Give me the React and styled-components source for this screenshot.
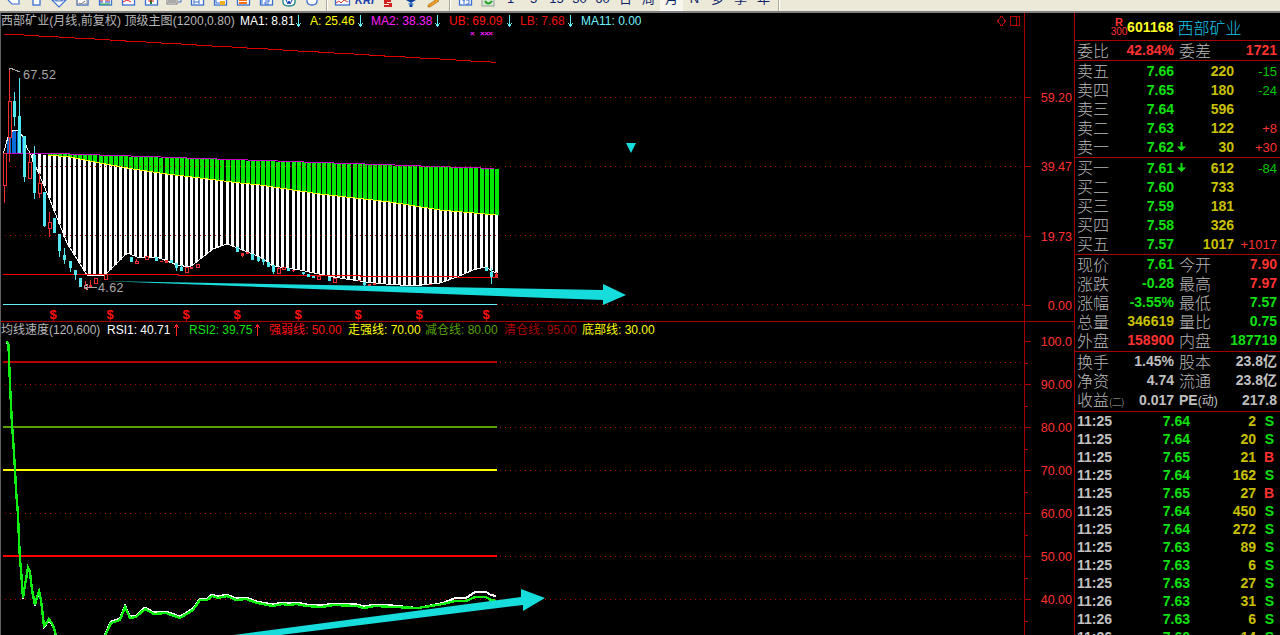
import React from "react";
import styled, { createGlobalStyle } from "styled-components";

const RED = "#ff3232";
const GREEN = "#10e010";
const OCHRE = "#c8c000";
const GREY = "#c0c0c0";
const LINE = "#a80000";

const GlobalStyle = createGlobalStyle`
  html, body { margin: 0; padding: 0; background: #000; height: 635px; overflow: hidden; }
  * { box-sizing: border-box; }
`;

const Page = styled.div`
  width: 1280px;
  height: 635px;
  display: flex;
  flex-direction: column;
  background: #000;
  overflow: hidden;
  font-family: "Liberation Sans", "Noto Sans CJK SC", sans-serif;
`;

/* ---------- toolbar ---------- */
const Toolbar = styled.div`
  height: 13px;
  flex: none;
  display: flex;
  background: #ece9d8;
  border-bottom: 2px solid #808080;
  overflow: hidden;
`;
const ToolGroup = styled.div`
  display: flex;
  padding-left: ${(p) => p.$pad || 0}px;
`;
const ToolSep = styled.div`
  width: 2px;
  height: 11px;
  margin-left: ${(p) => p.$left}px;
  background: #aca899;
  border-right: 1px solid #fff;
`;
const ToolButton = styled.div`
  width: ${(p) => p.$w || 23}px;
  height: 11px;
  display: flex;
  justify-content: center;
  overflow: hidden;
  background: ${(p) => (p.$pressed ? "#f7f5ec" : "transparent")};
  border-bottom: ${(p) => (p.$pressed ? "1px solid #fff" : "none")};
`;
const ToolText = styled.span`
  margin-top: -8px;
  font-size: 13px;
  line-height: 13px;
  color: #0a246a;
  white-space: nowrap;
`;
const BoldMark = styled.span`
  margin-top: -6px;
  font-size: 11px;
  line-height: 12px;
  font-weight: bold;
  font-style: italic;
  color: #2040b0;
`;

const Frame = ({ children, w = 12 }) => (
  <svg width="18" height="8" viewBox="0 0 18 8">
    <rect x={9 - w / 2 + 0.5} y="-3" width={w} height="8" fill="#fff" stroke="#3a6fd0" strokeWidth="1.3" />
    {children}
  </svg>
);
const Bare = ({ children }) => (
  <svg width="18" height="8" viewBox="0 0 18 8">{children}</svg>
);

const leftTools = [
  <Bare><path d="M4 0 L8 4 H15 V0" fill="#fff" stroke="#3a6fd0" strokeWidth="1.2" /></Bare>,
  <Frame w={7} />,
  <Bare><path d="M2 0 H6 V1 H12 V0 H16 L9 7 Z" fill="#fff" stroke="#3a6fd0" strokeWidth="1.2" /></Bare>,
  <Frame w={11}><path d="M6 3 L8 4 L12 1" stroke="#777" fill="none" /><rect x="4" y="-1" width="10" height="5" fill="none" stroke="#999" /></Frame>,
  <Frame><path d="M4 0 H7 M9 0 H14" stroke="#d00000" /><path d="M4 2 H7 M9 2 H14" stroke="#1030d0" /><path d="M4 4 H14" stroke="#10a030" /></Frame>,
  <Frame><path d="M4 2 L8 0 L12 2" stroke="#e02020" fill="none" /></Frame>,
  <Frame><path d="M9 0 V4" stroke="#108030" strokeWidth="2" /><path d="M6 1 H12" stroke="#e02020" /></Frame>,
  <Bare><rect x="2" y="-2" width="10" height="6" fill="#fff" stroke="#777" /><path d="M3 0 H11 M3 2 H11" stroke="#555" /><path d="M13 2 H16 V-2" stroke="#3a6fd0" fill="none" /></Bare>,
  <Frame><path d="M6 0 V4 M11 0 V4 M6 2 H11" stroke="#3a6fd0" /></Frame>,
  <Frame><rect x="9" y="1" width="5" height="4" fill="#f0b020" /><path d="M5 0 V3 H9" stroke="#3a6fd0" fill="none" /></Frame>,
  <Frame><rect x="5" y="-1" width="8" height="2" fill="#ff7010" /><rect x="5" y="2" width="8" height="2" fill="#ff7010" /></Frame>,
  <Frame><path d="M5 0 V4 M8 0 H12 V2 H8 V4 H12" stroke="#3a6fd0" fill="none" /></Frame>,
  <Bare><path d="M3 -2 V2 Q3 6 9 6 Q15 6 15 2 V-2" fill="#fff" stroke="#108080" strokeWidth="1.3" /><path d="M6 0 L8 4 L9 1 L10 4 L12 0" stroke="#1030b0" fill="none" /></Bare>,
  <Bare><path d="M4 -2 V1 Q4 5 9 5 Q14 5 14 1 V-2" fill="#fff" stroke="#3a6fd0" strokeWidth="1.3" /></Bare>,
];

const TrendTool = (
  <Frame w={14}><path d="M3 3 L6 1 L8 3 L11 0 L15 2" stroke="#d04030" fill="none" /></Frame>
);
const FlagTool = (
  <Bare><path d="M5 0 H12 V2 H8 V3 H13 V7 H5 V5 H10 V4 H5 Z" fill="#d02020" /></Bare>
);
const DropTool = (
  <Bare><path d="M4 0 H14 L9 3 Z" fill="#1040a0" /><path d="M9 3 V7" stroke="#1040a0" strokeWidth="3" /><path d="M6 4 H12" stroke="#60a0e0" /></Bare>
);
const PenTool = (
  <Bare><path d="M14 -1 L16 1 L7 7 L5 7 L5 5 Z" fill="#f0a020" stroke="#a06010" strokeWidth="0.6" /></Bare>
);
const BoxTool = (
  <Frame><path d="M6 0 H9 M8 0 V4 M10 0 H13 V4 H10" stroke="#3a6fd0" fill="none" /></Frame>
);
const RefreshTool = (
  <Bare><rect x="3" y="-2" width="12" height="8" fill="#d8e8d0" stroke="#90a0a0" /><path d="M6 1 Q9 6 13 1" stroke="#20a020" strokeWidth="2" fill="none" /></Bare>
);

const periods = ["1", "5", "15", "30", "60", "日", "周", "月", "N", "多", "季", "年"];

/* ---------- chart panes ---------- */
const Body = styled.div`
  flex: 1;
  display: flex;
  min-height: 0;
`;
const Charts = styled.div`
  width: 1075px;
  flex: none;
  display: flex;
  flex-direction: column;
  border-left: 1px solid #606060;
  border-right: 1px solid ${LINE};
`;
const Pane = styled.div`
  height: ${(p) => p.$h}px;
  flex: none;
  display: flex;
  border-bottom: ${(p) => (p.$divided ? `1px solid ${LINE}` : "none")};
  overflow: hidden;
`;
const Plot = styled.div`
  width: 1023px;
  flex: none;
  position: relative;
  svg { display: block; shape-rendering: crispEdges; }
`;
const Legend = styled.div`
  position: absolute;
  top: 0;
  left: 0;
  height: 16px;
  display: flex;
  align-items: center;
  font-size: 12px;
  line-height: 16px;
  white-space: nowrap;
`;
const LegendItem = styled.span`
  width: ${(p) => p.$w}px;
  flex: none;
  color: ${(p) => p.$color};
  letter-spacing: ${(p) => p.$track || 0}px;
`;
const ArrowSlot = styled.span`
  width: ${(p) => p.$w}px;
  flex: none;
  display: flex;
  align-items: center;
  padding-left: 3px;
`;
const Corner = styled.div`
  position: absolute;
  top: 3px;
  right: 4px;
  display: flex;
  gap: 4px;
  align-items: center;
`;
const Axis = styled.div`
  flex: 1;
  display: flex;
  flex-direction: column;
  gap: ${(p) => p.$step - 12}px;
  padding-top: ${(p) => p.$top}px;
  border-left: 1px solid ${LINE};
`;
const Tick = styled.div`
  position: relative;
  height: 12px;
  flex: none;
  font-size: 12.5px;
  line-height: 14px;
  color: ${RED};
  text-align: right;
  padding-right: 2px;
  &::before {
    content: "";
    position: absolute;
    left: 0;
    top: 6px;
    width: 6px;
    height: 1px;
    background: ${LINE};
  }
  &::after {
    content: "";
    display: ${(p) => (p.$minor ? "block" : "none")};
    position: absolute;
    left: 0;
    top: ${(p) => 6 + p.$minor / 2}px;
    width: 3px;
    height: 1px;
    background: ${LINE};
  }
`;

const interp = (pts, x) => {
  if (x <= pts[0][0]) return pts[0][1];
  for (let i = 1; i < pts.length; i++) {
    if (x <= pts[i][0]) {
      const [x0, y0] = pts[i - 1];
      const [x1, y1] = pts[i];
      return y0 + ((y1 - y0) * (x - x0)) / (x1 - x0);
    }
  }
  return pts[pts.length - 1][1];
};

const STEP = 5.08;
const barX = (i) => 3.5 + i * STEP;
const snap = (x) => barX(Math.round((x - 3.5) / STEP));

const yellowPts = [[30, 153.5], [48, 155], [70, 157], [100, 163], [133, 169], [167, 174], [200, 178], [240, 183], [260, 185], [320, 194], [390, 202], [440, 210], [496, 215]];
const lowPts = [[30, 153], [50, 200], [67, 243], [87, 275], [105, 275], [127, 253], [140, 258], [157, 257], [177, 265], [190, 267], [213, 249], [227, 244], [240, 249], [260, 257], [273, 266], [300, 270], [333, 277], [373, 283], [413, 286], [440, 283], [457, 277], [473, 270], [485, 267], [496, 273]];
const topLine = (x) => Math.round(153.5 + ((x - 42) * 15.5) / 454);

const bars = Array.from({ length: 98 }, (_, i) => {
  const x = barX(i);
  return { x: Math.round(x - 1.5), top: topLine(x), mid: Math.round(interp(yellowPts, x)), low: Math.round(interp(lowPts, x)) };
}).filter((b) => b.x > 30);

const hump = [[7, 137], [12, 130], [17, 132], [22, 137]];

const C = "#52e8f0";
const R = "#f03030";
// x, body top, body bottom, high, low, colour, hollow
const candles = [
  [3.5, 153, 185, 153, 203, R, 1], [8.6, 101, 137, 70, 162, R, 1], [13.7, 101, 117, 92, 126, C], [18.7, 116, 153, 78, 153, C],
  [23.8, 136, 177, 136, 182, C], [28.9, 162, 178, 153, 178, R, 1], [34, 155, 193, 146, 199, C], [39, 183, 193, 173, 198, R, 1],
  [44.1, 192, 226, 192, 227, C], [49.2, 222, 228, 212, 237, R, 1], [54.3, 218, 233, 218, 233, C], [59.4, 234, 251, 234, 257, C],
  [64.5, 255, 260, 248, 264, C], [69.6, 261, 268, 261, 272, C], [74.6, 270, 275, 270, 280, C], [79.7, 278, 287, 278, 287, C],
  [84.8, 285, 288, 281, 288, R, 1], [89.9, 285, 287, 280, 287, R], [95, 278, 283, 278, 283, R, 1], [105, 274, 279, 274, 279, R, 1],
  [130, 257, 262, 257, 262, C], [135, 261, 263, 259, 263, R, 1], [145, 256, 259, 256, 259, R, 1], [156, 257, 261, 257, 261, C],
  [162, 261, 262, 261, 262, R], [166, 260, 263, 260, 263, R], [171, 260, 263, 260, 263, C], [176, 263, 268, 263, 271, C],
  [182, 267, 271, 265, 271, C], [186, 267, 272, 267, 273, R, 1], [192, 267, 269, 267, 269, R], [197, 264, 267, 264, 267, R, 1],
  [237, 247, 252, 247, 252, C], [242, 253, 256, 253, 257, R], [247, 252, 254, 252, 254, R], [252, 254, 260, 254, 260, C],
  [257, 257, 261, 257, 262, C], [262, 259, 262, 259, 265, C], [267, 262, 267, 262, 267, C], [273, 265, 272, 265, 274, C],
  [278, 268, 273, 267, 274, R, 1], [283, 267, 269, 267, 269, R, 1], [288, 268, 271, 268, 271, C], [293, 270, 271, 270, 272, R],
  [303, 272, 274, 272, 275, C], [308, 274, 277, 274, 277, C], [313, 276, 278, 276, 278, C], [318, 276, 279, 276, 279, R, 1],
  [328, 277, 281, 277, 281, C], [334, 278, 282, 278, 282, R, 1], [359, 280, 281, 280, 281, R], [364, 282, 285, 282, 286, C],
  [369, 284, 286, 284, 286, R], [374, 283, 285, 283, 285, R], [430, 284, 285, 284, 285, R], [487, 267, 271, 267, 271, C],
  [492, 272, 277, 268, 284, C], [497, 274, 278, 272, 278, R],
];

const dollarX = [53, 110, 186, 237, 298, 358, 419, 486];

const stepPath = (fn, from, to) => {
  let d = "";
  for (let x = from; x <= to; x += STEP) d += `${d ? "L" : "M"}${x} ${fn(x)} `;
  return d;
};

const Dots = ({ y, x1 = 0 }) => (
  <line x1={x1} x2="1024" y1={y} y2={y} stroke="#b00000" strokeDasharray="1 4" />
);

const Marker = styled.text`
  font-family: "Liberation Sans", sans-serif;
  font-size: 12.5px;
  letter-spacing: 0.4px;
  fill: #a8a8a8;
`;
const Dollar = styled.text`
  font-family: "Liberation Sans", sans-serif;
  font-size: 13px;
  font-weight: bold;
  fill: #ff1010;
`;
const Crosses = styled.text`
  font-family: "Liberation Sans", sans-serif;
  font-size: 8px;
  font-weight: bold;
  fill: #ff20ff;
`;

const PricePlot = () => (
  <svg width="1023" height="308" viewBox="1 13 1023 308">
    <path d={stepPath((x) => Math.round(33.5 + ((x - 3.5) * 28.5) / 493), 3.5, 498)} fill="none" stroke="#e00000" />
    <Dots y="97.5" />
    {hump.map(([x, y]) => (
      <rect key={x} x={x} y={y} width="4" height={153 - y} fill="#0a6cd8" />
    ))}
    {bars.map((b) => (
      <React.Fragment key={b.x}>
        {b.x > 45 && <rect x={b.x} y={b.top} width="4" height={Math.max(b.mid - b.top, 0)} fill="#00e800" />}
        <rect x={b.x} y={b.mid} width="3" height={Math.max(b.low - b.mid, 0)} fill="#fff" />
      </React.Fragment>
    ))}
    <path d="M3 155 L8 137 L13 130 L18 130 L23 137 L27 148 L30 153" fill="none" stroke="#fff" />
    <polyline points={lowPts.map((p) => p.join(",")).join(" ")} fill="none" stroke="#fff" />
    <polyline points={yellowPts.filter((p) => p[0] > 47).map((p) => p.join(",")).join(" ")} fill="none" stroke="#ffff00" />
    <path d={`M3 153.5 H42 ${stepPath((x) => topLine(x) - 0.5, 42, 498).replace("M", "L")}`} fill="none" stroke="#c800c8" />
    <Dots y="166.5" />
    <Dots y="235.5" />
    <Dots y="304.5" x1="497" />
    <path d="M3 274.5 H178 V275.5 H360 V276.5 H457 V277.5 H497" fill="none" stroke="#ff0000" />
    <line x1="3" x2="497" y1="304.5" y2="304.5" stroke="#60f0f8" />
    {candles.map(([x, t, b, h, l, col, hollow]) => {
      const cx = Math.round(snap(x));
      return (
        <g key={x}>
          <line x1={cx + 0.5} x2={cx + 0.5} y1={h} y2={l} stroke={col} />
          <rect x={cx - 1} y={t} width="3" height={Math.max(b - t, 1)} fill={hollow ? "#000" : col} stroke={hollow ? col : "none"} />
        </g>
      );
    })}
    <path d="M9 70 V68 H12 M10 68 L20 72" fill="none" stroke="#a8a8a8" />
    <Marker x="23" y="79">67.52</Marker>
    <path d="M84 287 H97 M84 287 L88 284 M84 287 L88 290" fill="none" stroke="#a8a8a8" />
    <Marker x="98" y="292">4.62</Marker>
    {dollarX.map((x) => (
      <Dollar key={x} x={x} y="319" textAnchor="middle">$</Dollar>
    ))}
    <Crosses x="470" y="36">×</Crosses>
    <Crosses x="480" y="36" letterSpacing="-0.5">×××</Crosses>
    <g shapeRendering="geometricPrecision" fill="#17dcdc">
      <polygon points="102,281 603,290 603,284 626,295 603,305 603,300" />
      <polygon points="626,143 636,143 631,153" />
    </g>
  </svg>
);

const greenCurve = [[7, 341], [8.5, 345], [10, 385], [12, 425], [13.5, 445], [15, 470], [16, 490], [18, 515], [19, 540], [20, 560], [21, 570], [23, 598], [25, 585], [28, 568], [30, 572], [32, 590], [35, 605], [37, 597], [39, 591], [41, 600], [44, 626], [46, 624], [49, 619], [53, 625], [58, 642], [102, 642], [111, 623], [120, 620], [125, 607], [130, 618], [136, 617], [145, 609], [154, 614], [166, 613], [180, 618], [193, 610], [200, 600], [207, 600], [212, 596], [218, 598], [227, 596], [236, 600], [246, 599], [257, 603], [273, 606], [282, 604], [289, 605], [296, 604], [307, 606], [321, 607], [334, 605], [357, 606], [364, 608], [375, 606], [393, 607], [418, 608], [443, 604], [455, 601], [466, 601], [475, 597], [486, 597], [491, 600], [496, 601]];
const whiteCurve = greenCurve.map(([x, y]) => {
  if (x >= 475) return [x, y - 5];
  if (x >= 455) return [x, y - 3];
  if (x >= 443) return [x, y - 1];
  if (x >= 418) return [x, y];
  return [x, x > 100 ? y - 1.5 : y + 1];
});
const asPoints = (pts) => pts.map((p) => p.join(",")).join(" ");
const levelLines = [[362, "#b80000"], [427, "#58a000"], [470, "#ffff00"], [556, "#ff0000"]];

const RsiPlot = () => (
  <svg width="1023" height="313" viewBox="1 322 1023 313">
    {[362, 384, 427, 470, 513, 556, 599].map((y) => (
      <Dots key={y} y={y + 0.5} />
    ))}
    {levelLines.map(([y, col]) => (
      <rect key={y} x="3" y={y - 1} width="494" height="2" fill={col} />
    ))}
    <polyline points={asPoints(whiteCurve)} fill="none" stroke="#fff" strokeWidth="2" />
    <polyline points={asPoints(greenCurve)} fill="none" stroke="#10f010" strokeWidth="2.4" />
    <g shapeRendering="geometricPrecision">
      <polygon points="196,640 521,597 521,589 545,598 523,611 523,605 240,640" fill="#17dcdc" />
    </g>
  </svg>
);

const LegendArrow = ({ color, up }) => (
  <svg width="7" height="12" viewBox="0 0 7 12" style={{ display: "block" }}>
    <g transform={up ? "" : "rotate(180 3.5 6)"} fill="none" stroke={color}>
      <path d="M3.5 1 V12" />
      <path d="M1 4 L3.5 1 L6 4" />
    </g>
  </svg>
);

const topLegend = [
  ["MA1: 8.81", "#ffffff", 52, 18],
  ["A: 25.46", "#ffff00", 44, 17],
  ["MA2: 38.38", "#ff20ff", 60, 18],
  ["UB: 69.09", "#ff1010", 54, 17],
  ["LB: 7.68", "#e81010", 44, 17],
  ["MA11: 0.00", "#70f0f8", 60, 0],
];
const rsiLegend = [
  ["强弱线: 50.00", "#ff1010", 79],
  ["走强线: 70.00", "#ffff00", 77],
  ["减仓线: 80.00", "#58a000", 79],
  ["清仓线: 95.00", "#a80000", 78],
  ["底部线: 30.00", "#ffff00", 74],
];

/* ---------- quote panel ---------- */
const Side = styled.div`
  flex: 1;
  min-width: 0;
  display: flex;
  flex-direction: column;
  overflow: hidden;
`;
const StockHead = styled.div`
  height: 28px;
  flex: none;
  display: flex;
  align-items: center;
  padding-left: 36px;
  border-bottom: 1px solid ${LINE};
`;
const Badge = styled.div`
  width: 16px;
  display: flex;
  flex-direction: column;
  align-items: center;
  color: ${RED};
  font-size: 10px;
  line-height: 10px;
  span:first-child { font-weight: bold; font-size: 11px; }
`;
const StockCode = styled.span`
  font-size: 14px;
  font-weight: bold;
  color: #ffff20;
  letter-spacing: 0.1px;
`;
const StockName = styled.span`
  margin-left: 4px;
  font-family: "Noto Sans CJK SC", sans-serif;
  font-size: 16px;
  font-weight: 300;
  color: #18c8ec;
`;
const Section = styled.div`
  flex: none;
  padding-bottom: ${(p) => p.$pb || 0}px;
  border-bottom: 1px solid ${LINE};
`;
const Num = styled.span`
  font-size: 14px;
  font-weight: bold;
  text-align: right;
  color: ${(p) => p.$c || GREY};
  white-space: nowrap;
  small { font-size: 12px; font-weight: normal; }
`;
const Diff = styled.span`
  font-size: 13px;
  text-align: right;
  color: ${(p) => (p.$v[0] === "+" ? RED : "#00c800")};
`;
const BookRow = styled.div`
  height: 19px;
  display: grid;
  grid-template-columns: 40px 57px 14px 46px 43px;
  align-items: start;
  padding-left: 2px;
  line-height: 19px;
  ${Num}, ${Diff} { line-height: 21px; }
`;
const StatRow = styled.div`
  height: 19px;
  display: grid;
  grid-template-columns: 40px 57px 38px 65px;
  align-items: center;
  padding-left: 2px;
  line-height: 19px;
`;
const Label = styled.span`
  font-family: "Noto Sans CJK SC", sans-serif;
  font-size: 16px;
  font-weight: 300;
  color: #b8b8b8;
  white-space: nowrap;
  small { font-size: 10px; letter-spacing: -0.5px; }
`;
const SideLabel = styled(Label)`
  padding-left: 5px;
`;
const PeLabel = styled(Num)`
  text-align: left;
  padding-left: 5px;
`;
const ArrowCell = styled.span`
  display: flex;
  align-items: center;
  height: 19px;
  padding-left: 3px;
`;
const TradeList = styled.div`
  flex: 1;
`;
const TradeRow = styled.div`
  height: 18px;
  display: grid;
  grid-template-columns: 50px 63px 66px 18px;
  align-items: center;
  padding-left: 2px;
  line-height: 18px;
`;
const TradeTime = styled(Num)`
  text-align: left;
`;
const TradeFlag = styled.span`
  font-size: 14px;
  font-weight: bold;
  text-align: right;
  color: ${(p) => (p.$f === "B" ? RED : GREEN)};
`;

const DownArrow = () => (
  <svg width="9" height="9" viewBox="0 0 9 9">
    <path d="M3.5 0 H5.5 V4.5 H9 L4.5 9 L0 4.5 H3.5 Z" fill={GREEN} />
  </svg>
);

const sells = [
  ["卖五", "7.66", "220", "-15"],
  ["卖四", "7.65", "180", "-24"],
  ["卖三", "7.64", "596", ""],
  ["卖二", "7.63", "122", "+8"],
  ["卖一", "7.62", "30", "+30", true],
];
const buys = [
  ["买一", "7.61", "612", "-84", true],
  ["买二", "7.60", "733", ""],
  ["买三", "7.59", "181", ""],
  ["买四", "7.58", "326", ""],
  ["买五", "7.57", "1017", "+1017"],
];
const stats = [
  ["现价", "7.61", GREEN, "今开", "7.90", RED],
  ["涨跌", "-0.28", GREEN, "最高", "7.97", RED],
  ["涨幅", "-3.55%", GREEN, "最低", "7.57", GREEN],
  ["总量", "346619", OCHRE, "量比", "0.75", GREEN],
  ["外盘", "158900", RED, "内盘", "187719", GREEN],
];
const trades = [
  ["11:25", "7.64", "2", "S"], ["11:25", "7.64", "20", "S"], ["11:25", "7.65", "21", "B"],
  ["11:25", "7.64", "162", "S"], ["11:25", "7.65", "27", "B"], ["11:25", "7.64", "450", "S"],
  ["11:25", "7.64", "272", "S"], ["11:25", "7.63", "89", "S"], ["11:25", "7.63", "6", "S"],
  ["11:25", "7.63", "27", "S"], ["11:26", "7.63", "31", "S"], ["11:26", "7.63", "6", "S"],
  ["11:26", "7.60", "14", "S"],
];

const Book = ({ rows }) => rows.map(([label, price, vol, diff, arrow]) => (
  <BookRow key={label}>
    <Label>{label}</Label>
    <Num $c={GREEN}>{price}</Num>
    <ArrowCell>{arrow && <DownArrow />}</ArrowCell>
    <Num $c={OCHRE}>{vol}</Num>
    <Diff $v={diff || "+"}>{diff}</Diff>
  </BookRow>
));

export default function App() {
  return (
    <Page>
      <GlobalStyle />
      <Toolbar>
        <ToolGroup $pad={1}>
          {leftTools.map((icon, i) => (
            <ToolButton key={i}>{icon}</ToolButton>
          ))}
        </ToolGroup>
        <ToolSep $left={3} />
        <ToolGroup $pad={2}>
          <ToolButton>{TrendTool}</ToolButton>
          <ToolButton><BoldMark>KRI</BoldMark></ToolButton>
          <ToolButton>{FlagTool}</ToolButton>
          <ToolButton>{DropTool}</ToolButton>
          <ToolButton $w={20}>{PenTool}</ToolButton>
        </ToolGroup>
        <ToolSep $left={7} />
        <ToolGroup $pad={2}>
          <ToolButton>{BoxTool}</ToolButton>
          <ToolButton>{RefreshTool}</ToolButton>
          {periods.map((p) => (
            <ToolButton key={p} $pressed={p === "月"}>
              <ToolText>{p}</ToolText>
            </ToolButton>
          ))}
        </ToolGroup>
        <ToolSep $left={3} />
      </Toolbar>
      <Body>
        <Charts>
          <Pane $h={309} $divided>
            <Plot>
              <PricePlot />
              <Legend>
                <LegendItem $w={239} $color="#b8b8b8" $track={0.06}>西部矿业(月线,前复权) 顶级主图(1200,0.80)</LegendItem>
                {topLegend.map(([text, color, w, slot]) => (
                  <React.Fragment key={text}>
                    <LegendItem $w={w} $color={color}>{text}</LegendItem>
                    {slot > 0 && (
                      <ArrowSlot $w={slot}><LegendArrow color="#60f0f8" /></ArrowSlot>
                    )}
                  </React.Fragment>
                ))}
              </Legend>
              <Corner>
                <svg width="9" height="10" viewBox="0 0 9 10">
                  <path d="M4.5 0 L8.5 5 L4.5 10 L0.5 5 Z" fill="none" stroke="#b00000" />
                </svg>
                <svg width="10" height="10" viewBox="0 0 10 10">
                  <path d="M0.5 0.5 H9.5 V9.5 H0.5 Z M6.5 0.5 V9.5" fill="none" stroke="#b00000" />
                </svg>
              </Corner>
            </Plot>
            <Axis $top={78} $step={69.33}>
              {["59.20", "39.47", "19.73", "0.00"].map((t) => (
                <Tick key={t}>{t}</Tick>
              ))}
            </Axis>
          </Pane>
          <Pane $h={313}>
            <Plot>
              <RsiPlot />
              <Legend>
                <LegendItem $w={106} $color="#b8b8b8">均线速度(120,600)</LegendItem>
                <LegendItem $w={63} $color="#ffffff">RSI1: 40.71</LegendItem>
                <ArrowSlot $w={19}><LegendArrow color="#ff2020" up /></ArrowSlot>
                <LegendItem $w={62} $color="#10e010">RSI2: 39.75</LegendItem>
                <ArrowSlot $w={18}><LegendArrow color="#ff2020" up /></ArrowSlot>
                {rsiLegend.map(([text, color, w]) => (
                  <LegendItem key={text} $w={w} $color={color}>{text}</LegendItem>
                ))}
              </Legend>
            </Plot>
            <Axis $top={13} $step={43}>
              {["100.0", "90.00", "80.00", "70.00", "60.00", "50.00", "40.00"].map((t) => (
                <Tick key={t} $minor={43}>{t}</Tick>
              ))}
            </Axis>
          </Pane>
        </Charts>
        <Side>
          <StockHead>
            <Badge><span>R</span><span>300</span></Badge>
            <StockCode>601168</StockCode>
            <StockName>西部矿业</StockName>
          </StockHead>
          <Section>
            <StatRow>
              <Label>委比</Label>
              <Num $c={RED}>42.84%</Num>
              <SideLabel>委差</SideLabel>
              <Num $c={RED}>1721</Num>
            </StatRow>
          </Section>
          <Section $pb={1}><Book rows={sells} /></Section>
          <Section $pb={1}><Book rows={buys} /></Section>
          <Section $pb={1}>
            {stats.map(([a, v, c, b, w, d]) => (
              <StatRow key={a}>
                <Label>{a}</Label>
                <Num $c={c}>{v}</Num>
                <SideLabel>{b}</SideLabel>
                <Num $c={d}>{w}</Num>
              </StatRow>
            ))}
          </Section>
          <Section $pb={2}>
            <StatRow>
              <Label>换手</Label>
              <Num>1.45%</Num>
              <SideLabel>股本</SideLabel>
              <Num>23.8亿</Num>
            </StatRow>
            <StatRow>
              <Label>净资</Label>
              <Num>4.74</Num>
              <SideLabel>流通</SideLabel>
              <Num>23.8亿</Num>
            </StatRow>
            <StatRow>
              <Label>收益<small>(二)</small></Label>
              <Num>0.017</Num>
              <PeLabel>PE<small>(动)</small></PeLabel>
              <Num>217.8</Num>
            </StatRow>
          </Section>
          <TradeList>
            {trades.map(([t, p, v, f], i) => (
              <TradeRow key={i}>
                <TradeTime>{t}</TradeTime>
                <Num $c={GREEN}>{p}</Num>
                <Num $c={OCHRE}>{v}</Num>
                <TradeFlag $f={f}>{f}</TradeFlag>
              </TradeRow>
            ))}
          </TradeList>
        </Side>
      </Body>
    </Page>
  );
}
